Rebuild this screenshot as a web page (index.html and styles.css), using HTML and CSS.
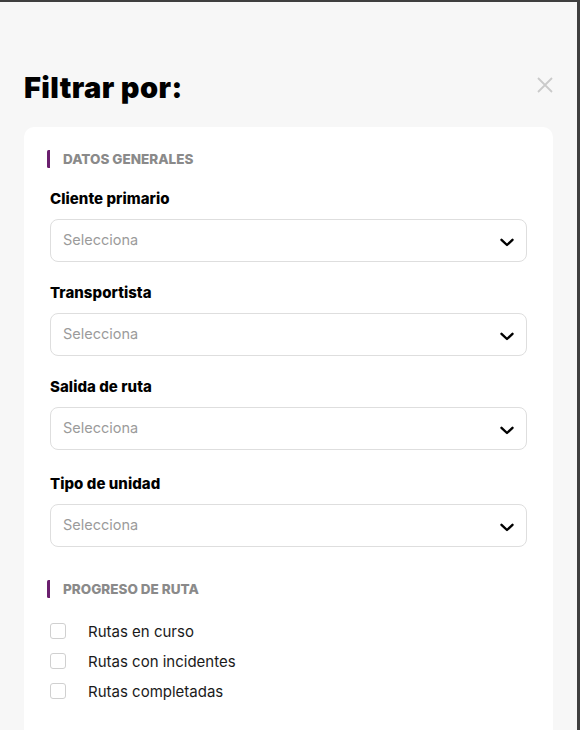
FILE: index.html
```html
<!DOCTYPE html>
<html lang="es">
<head>
<meta charset="utf-8">
<title>Filtrar por</title>
<link rel="stylesheet" href="styles.css">
</head>
<body>
<div class="panel">
  <div class="panel-head">
    <h1 class="title">Filtrar por:</h1>
    <button class="close" aria-label="Cerrar">
      <svg width="16" height="16" viewBox="0 0 16 16"><path d="M1 1 L15 15 M15 1 L1 15" stroke="#cacaca" stroke-width="1.8" fill="none"/></svg>
    </button>
  </div>
  <div class="card">
    <div class="section-title">DATOS GENERALES</div>

    <div class="field">
      <div class="label">Cliente primario</div>
      <div class="select"><span class="placeholder">Selecciona</span><svg class="chev" width="14" height="9" viewBox="0 0 14 9"><path d="M1.5 1.8 L7 7 L12.5 1.8" stroke="#000" stroke-width="2.4" fill="none" stroke-linecap="round" stroke-linejoin="round"/></svg></div>
    </div>
    <div class="field">
      <div class="label">Transportista</div>
      <div class="select"><span class="placeholder">Selecciona</span><svg class="chev" width="14" height="9" viewBox="0 0 14 9"><path d="M1.5 1.8 L7 7 L12.5 1.8" stroke="#000" stroke-width="2.4" fill="none" stroke-linecap="round" stroke-linejoin="round"/></svg></div>
    </div>
    <div class="field">
      <div class="label">Salida de ruta</div>
      <div class="select"><span class="placeholder">Selecciona</span><svg class="chev" width="14" height="9" viewBox="0 0 14 9"><path d="M1.5 1.8 L7 7 L12.5 1.8" stroke="#000" stroke-width="2.4" fill="none" stroke-linecap="round" stroke-linejoin="round"/></svg></div>
    </div>
    <div class="field field-last">
      <div class="label">Tipo de unidad</div>
      <div class="select"><span class="placeholder">Selecciona</span><svg class="chev" width="14" height="9" viewBox="0 0 14 9"><path d="M1.5 1.8 L7 7 L12.5 1.8" stroke="#000" stroke-width="2.4" fill="none" stroke-linecap="round" stroke-linejoin="round"/></svg></div>
    </div>

    <div class="section-title section-second">PROGRESO DE RUTA</div>
    <div class="checks">
      <label class="check"><span class="box"></span><span class="check-text">Rutas en curso</span></label>
      <label class="check"><span class="box"></span><span class="check-text">Rutas con incidentes</span></label>
      <label class="check"><span class="box"></span><span class="check-text">Rutas completadas</span></label>
    </div>
  </div>
</div>
</body>
</html>
```

FILE: styles.css
```css
* { box-sizing: border-box; }
html, body { margin: 0; padding: 0; height: 100%; overflow: hidden; }
body {
  font-family: Inter, "Noto Sans", "Liberation Sans", sans-serif;
  background: #f7f7f7;
  color: #111;
}
.panel {
  height: 100vh;
  overflow: hidden;
  border-top: 2px solid #3f3f3f;
  border-right: 3px solid #3f3f3f;
  background: #f7f7f7;
  padding: 69px 24px 0 24px;
}
.panel-head {
  display: flex;
  justify-content: space-between;
  align-items: flex-start;
}
.title {
  margin: 0;
  font-size: 29px;
  line-height: 34px;
  font-weight: 900;
  color: #000;
  letter-spacing: 0.4px;
}
.close {
  border: 0;
  background: none;
  padding: 0;
  margin-top: 6px;
  width: 16px;
  height: 16px;
  display: block;
}
.close svg { display: block; }
.card {
  margin-top: 22px;
  background: #fff;
  border-radius: 10px 10px 0 0;
  padding: 23px 26px 40px 26px;
  min-height: 620px;
}
.section-title {
  margin-left: -3px;
  border-left: 3px solid #6a1f6e;
  border-radius: 1.5px;
  padding-left: 13px;
  height: 18px;
  line-height: 18px;
  font-size: 13.5px;
  font-weight: 800;
  color: #8a8a8a;
}
.field { padding-top: 20px; }
.field-last { padding-top: 23px; }
.label {
  font-size: 15px;
  line-height: 20px;
  font-weight: 800;
  color: #000;
  letter-spacing: 0.05px;
  padding-top: 1px;
  margin-bottom: 10px;
}
.select {
  height: 43px;
  border: 1px solid #dedede;
  border-radius: 8px;
  background: #fff;
  display: flex;
  align-items: center;
  justify-content: space-between;
  padding: 0 12px 2px 12px;
}
.placeholder {
  font-size: 14.5px;
  color: #9b9b9b;
}
.chev { display: block; margin-top: 5px; }
.section-second { margin-top: 33px; }
.checks {
  margin-top: 18px;
  display: flex;
  flex-direction: column;
}
.check {
  display: flex;
  align-items: center;
  height: 30px;
}
.box {
  width: 16px;
  height: 16px;
  border: 1px solid #d0d0d0;
  border-radius: 3px;
  background: #fff;
  flex: none;
}
.check-text {
  margin-left: 22px;
  font-size: 15px;
  color: #1a1a1a;
}
```
